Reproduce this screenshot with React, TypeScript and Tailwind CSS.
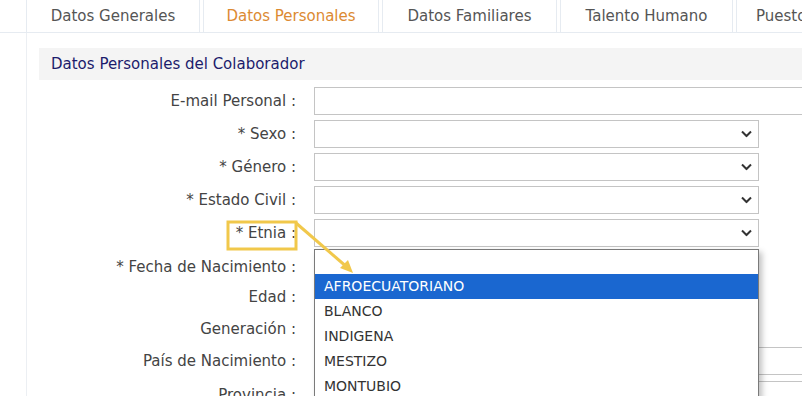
import React from 'react';

const tabs = [
  { t: 'Datos Generales', w: 'w-[174px]' },
  { t: 'Datos Personales', w: 'w-[176px]' },
  { t: 'Datos Familiares', w: 'w-[175px]' },
  { t: 'Talento Humano', w: 'w-[173px]' },
  { t: 'Puesto', w: 'w-[120px]' },
];
const etnias = ['AFROECUATORIANO', 'BLANCO', 'INDIGENA', 'MESTIZO', 'MONTUBIO'];

const Chevron = () => (
  <svg width="11" height="7" viewBox="0 0 11 7" className="absolute right-[6px] top-1/2 -translate-y-1/2">
    <path d="M1 1 L5.5 5.5 L10 1" fill="none" stroke="#333" strokeWidth="2" />
  </svg>
);

const Label = ({ text }: { text: string }) => (
  <div className="w-[271px] shrink-0 text-right pr-[1px] text-[15px] text-[#444] leading-none">{text}</div>
);

const Row = ({ label, kind, className }: { label: string; kind: 'wide' | 'select' | 'short' | 'none'; className?: string }) => (
  <div className={`flex items-center h-[28px] ${className ?? ''}`}>
    <Label text={label} />
    <div className="ml-[17px]">
      {kind === 'wide' && <div className="w-[520px] h-[28px] border border-[#c4c4c4] bg-white" />}
      {kind === 'select' && (
        <div className="relative w-[445px] h-[28px] border border-[#c4c4c4] bg-white">
          <Chevron />
        </div>
      )}
      {kind === 'short' && <div className="w-[200px] h-[28px] border border-[#c4c4c4] bg-white" />}
    </div>
  </div>
);

export default function App() {
  return (
    <div className="relative w-[802px] h-[396px] overflow-hidden bg-white" style={{ fontFamily: '"DejaVu Sans", Verdana, sans-serif' }}>
      {/* tabs */}
      <div className="flex gap-[3px] pl-[26px] h-[33px] border-b border-[#e6ebf1]">
        {tabs.map((tab, i) => (
          <div
            key={tab.t}
            className={`${tab.w} shrink-0 flex items-center border-x border-[#e6ebf1] text-[15px] whitespace-nowrap ${i === 4 ? 'justify-start pl-[19px]' : 'justify-center'} ${i === 1 ? 'text-[#dc8a32]' : 'text-[#555]'}`}
          >
            {tab.t}
          </div>
        ))}
      </div>

      {/* panel */}
      <div className="ml-[26px] border-l border-[#eceff3] h-[363px] pt-[15px]">
        <div className="ml-[12px] h-[32px] bg-[#f4f4f4] flex items-center pl-[12px] text-[15px] text-[#1c1c6c]">
          Datos Personales del Colaborador
        </div>
        <div className="-ml-[1px] pt-[7px] flex flex-col">
          <Row label="E-mail Personal :" kind="wide" />
          <Row label="* Sexo :" kind="select" className="mt-[5px]" />
          <Row label="* Género :" kind="select" className="mt-[5px]" />
          <Row label="* Estado Civil :" kind="select" className="mt-[5px]" />
          <Row label="* Etnia :" kind="select" className="mt-[5px]" />
          <Row label="* Fecha de Nacimiento :" kind="short" className="mt-[6px]" />
          <Row label="Edad :" kind="short" className="mt-[2px]" />
          <Row label="Generación :" kind="short" className="mt-[4px]" />
          <Row label="País de Nacimiento :" kind="wide" className="mt-[4px]" />
          <Row label="Provincia :" kind="wide" className="mt-[6px]" />
        </div>
      </div>

      {/* open select list */}
      <div className="absolute left-[314px] top-[249px] w-[445px] bg-white border border-[#7a7a7a] shadow-[3px_3px_6px_rgba(0,0,0,0.25)]">
        <div className="h-[24px]" />
        {etnias.map((e, i) => (
          <div
            key={e}
            className={`h-[25px] flex items-center pl-[9px] text-[14px] ${i === 0 ? 'bg-[#1a67d0] text-white' : 'text-[#333]'}`}
          >
            {e}
          </div>
        ))}
      </div>

      {/* annotation */}
      <svg className="absolute left-0 top-0 pointer-events-none" width="802" height="396">
        <rect x="228" y="222" width="68" height="27" fill="none" stroke="#f1c84b" strokeWidth="3" />
        <line x1="296" y1="223" x2="348" y2="268" stroke="#f1c84b" strokeWidth="3" />
        <path d="M353 273 L340 268 L348 260 Z" fill="#f1c84b" />
      </svg>
    </div>
  );
}
